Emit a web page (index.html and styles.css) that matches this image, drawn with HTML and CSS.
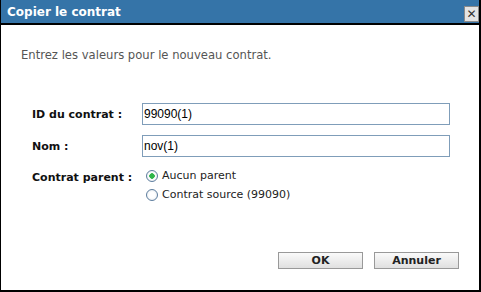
FILE: index.html
```html
<!DOCTYPE html>
<html lang="fr">
<head>
    <meta charset="UTF-8">
    <title>Copier le contrat</title>
    <link rel="stylesheet" href="styles.css">
</head>
<body>
    <div class="dialog">
        <div class="titlebar">
            <span class="title">Copier le contrat</span>
            <span class="close">&#x2715;</span>
        </div>
        <div class="content">
            <p class="intro">Entrez les valeurs pour le nouveau contrat.</p>
            <div class="form">
                <label class="label" for="cid">ID du contrat :</label>
                <input class="field" id="cid" type="text" value="99090(1)">
                <label class="label" for="nom">Nom :</label>
                <input class="field" id="nom" type="text" value="nov(1)">
                <span class="label parent-label">Contrat parent :</span>
                <div class="choices">
                    <label class="choice"><input type="radio" name="parent" checked> Aucun parent</label>
                    <label class="choice"><input type="radio" name="parent"> Contrat source (99090)</label>
                </div>
            </div>
        </div>
        <div class="buttons">
            <button>OK</button>
            <button>Annuler</button>
        </div>
    </div>
</body>
</html>
```

FILE: styles.css
```css
body {
    margin: 0;
    font-family: "DejaVu Sans", Verdana, sans-serif;
    font-size: 11px;
    background: #fff;
}
.dialog {
    width: 481px;
    height: 292px;
    box-sizing: border-box;
    border-left: 1px solid #000;
    border-right: 2px solid #000;
    border-bottom: 2px solid #000;
    display: flex;
    flex-direction: column;
}
.titlebar {
    height: 23px;
    background: #3574a8;
    border-bottom: 2px solid #000;
    display: flex;
    align-items: center;
    justify-content: space-between;
    padding-left: 6px;
}
.title {
    color: #fff;
    font-weight: bold;
    font-size: 12px;
    margin-top: 1px;
}
.close {
    width: 13px;
    height: 14px;
    margin-top: 4px;
    border: 1px solid #8a8a8a;
    background: #e4e4e4;
    color: #333;
    font-size: 12px;
    line-height: 14px;
    text-align: center;
}
.content {
    flex: 1;
    padding: 0 0 0 20px;
}
.intro {
    margin: 23px 0 0;
    color: #555;
    font-size: 11.6px;
}
.form {
    display: grid;
    grid-template-columns: 110px 308px;
    row-gap: 10px;
    margin-top: 41px;
    padding-left: 11px;
}
.label {
    font-weight: bold;
    color: #111;
    align-self: center;
}
.parent-label {
    align-self: start;
    margin-top: 4px;
}
.field {
    height: 22px;
    box-sizing: border-box;
    border: 1px solid #7f9db9;
    padding: 1px 1px;
    font-family: "Liberation Sans", Arial, sans-serif;
    font-size: 12px;
    color: #000;
}
.choices {
    display: flex;
    flex-direction: column;
    gap: 6px;
    padding: 2px 0 0 4px;
}
.choice {
    display: flex;
    align-items: center;
    gap: 4px;
    color: #222;
}
.choice input {
    appearance: none;
    margin: 0;
    width: 12px;
    height: 12px;
    border-radius: 50%;
    border: 1px solid #5d7d9e;
    background: radial-gradient(circle, #fff 40%, #dde4ea 100%);
    box-sizing: border-box;
}
.choice input:checked {
    background: radial-gradient(circle, #2fb54a 0 2.5px, #fff 3px 40%, #dde4ea 100%);
}
.buttons {
    display: flex;
    justify-content: flex-end;
    gap: 11px;
    padding: 0 20px 21px 0;
}
button {
    width: 85px;
    height: 17px;
    padding: 0;
    border: 1px solid #999;
    background: linear-gradient(#fafafa, #e0e0e0);
    font-family: "DejaVu Sans", Verdana, sans-serif;
    font-size: 11px;
    font-weight: bold;
    color: #222;
}
```
